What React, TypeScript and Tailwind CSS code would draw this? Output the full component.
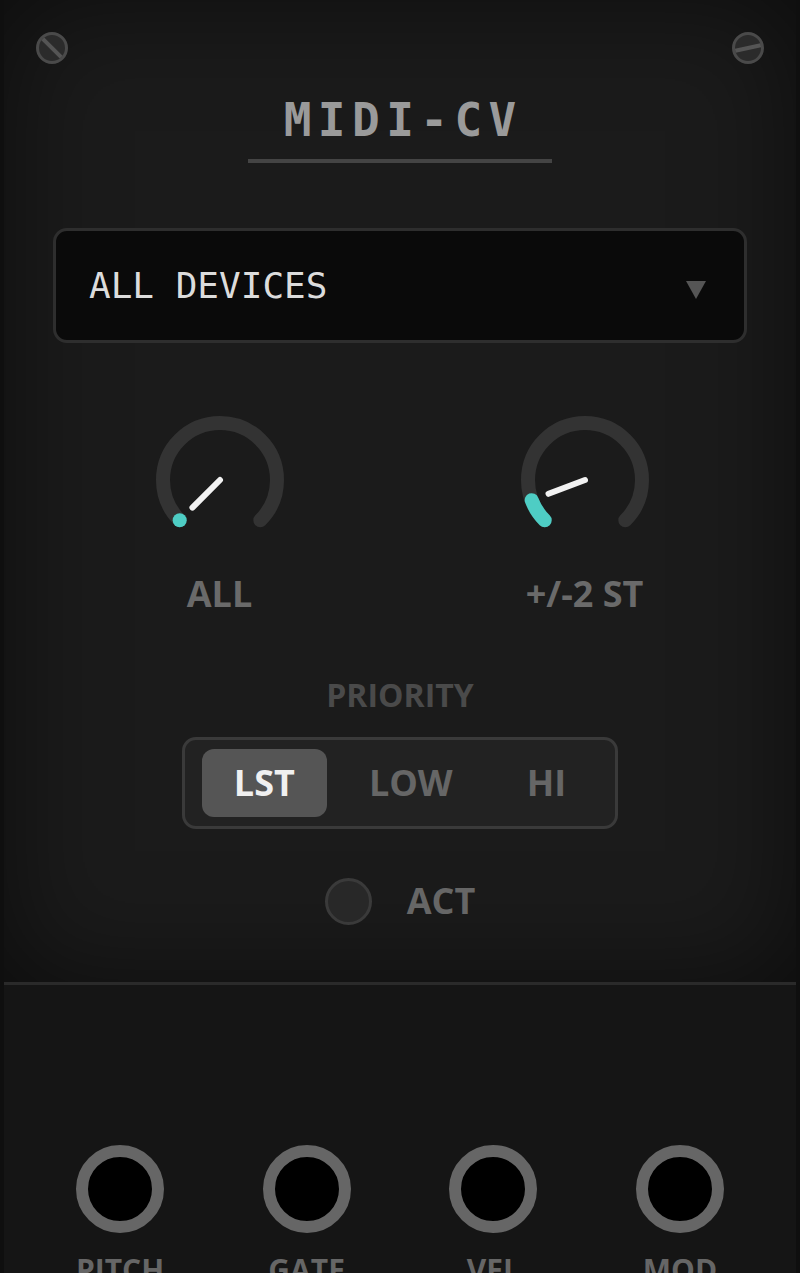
import React from "react";

// clock angle: 0 = up, clockwise
const pt = (deg: number, r: number) => {
  const a = (deg * Math.PI) / 180;
  return [70 + r * Math.sin(a), 70 - r * Math.cos(a)];
};

const Knob = ({ value, label }: { value: number; label: string }) => {
  const start = -135;
  const end = start + 270 * value;
  const [sx, sy] = pt(start, 57);
  const [ex, ey] = pt(135, 57);
  const [vx, vy] = pt(end, 57);
  const [px, py] = pt(end, 39);
  return (
    <div className="flex flex-col items-center">
      <svg width="140" height="140" viewBox="0 0 140 140">
        <path
          d={`M ${sx} ${sy} A 57 57 0 1 1 ${ex} ${ey}`}
          fill="none"
          stroke="#333333"
          strokeWidth="14"
          strokeLinecap="round"
        />
        <path
          d={`M ${sx} ${sy} A 57 57 0 0 1 ${vx} ${vy}`}
          fill="none"
          stroke="#4ecdc4"
          strokeWidth="14"
          strokeLinecap="round"
        />
        <line x1="70" y1="70" x2={px} y2={py} stroke="#f2f2f2" strokeWidth="6" strokeLinecap="round" />
      </svg>
      <div className="mt-[22px] text-[36px] leading-[1.2] font-bold text-[#6a6a6a] font-['Open_Sans',sans-serif]">
        {label}
      </div>
    </div>
  );
};

const Jack = ({ label }: { label: string }) => (
  <div className="flex w-[100px] flex-col items-center">
    <div className="h-[88px] w-[88px] rounded-full border-[12px] border-[#666666] bg-black" />
    <div className="mt-[19px] text-[30px] leading-[1.2] font-bold text-[#666666] font-['Open_Sans',sans-serif]">
      {label}
    </div>
  </div>
);

const Screw = ({ className, slot }: { className: string; slot: string }) => (
  <div
    className={`absolute flex h-8 w-8 items-center justify-center rounded-full border-[3px] border-[#4a4a4a] bg-[#2b2b2b] ${className}`}
  >
    <div className={`h-[4px] w-[26px] bg-[#555555] ${slot}`} />
  </div>
);

export default function App() {
  return (
    <div className="min-h-screen w-full border-x-4 border-[#0f0f0f] bg-[#151515] font-['Open_Sans',sans-serif]">
      {/* upper panel */}
      <div className="relative flex flex-col items-center bg-[#1b1b1b] px-[49px] pt-[97px] pb-[57px] shadow-[inset_0_0_110px_rgba(0,0,0,0.55)]">
        <Screw className="top-[32px] left-[32px]" slot="rotate-45" />
        <Screw className="top-[32px] right-[32px]" slot="-rotate-12" />

        <h1 className="pl-[0.14em] text-[46px] leading-none font-bold tracking-[0.14em] text-[#9a9a9a] font-['DejaVu_Sans_Mono',monospace]">
          MIDI-CV
        </h1>
        <div className="mt-[16px] h-[4px] w-[304px] bg-[#444444]" />

        <div className="mt-[65px] flex h-[115px] w-full items-center justify-between rounded-[14px] border-[3px] border-[#2e2e2e] bg-[#0a0a0a] pr-[38px] pl-[33px]">
          <span className="text-[36px] text-[#dcdcdc] font-['DejaVu_Sans_Mono',monospace]">ALL DEVICES</span>
          <svg width="20" height="18" viewBox="0 0 20 18" className="mt-[8px]">
            <polygon points="0,0 20,0 10,18" fill="#555555" />
          </svg>
        </div>

        <div className="mt-[67px] grid w-full grid-cols-2">
          <div className="flex justify-center pr-[14px]">
            <Knob value={0} label="ALL" />
          </div>
          <div className="flex justify-center pl-[22px]">
            <Knob value={0.09} label="+/-2 ST" />
          </div>
        </div>

        <div className="mt-[61px] text-[32px] leading-[1.2] font-bold text-[#4a4a4a]">PRIORITY</div>

        <div className="mt-[22px] flex gap-[10px] rounded-[14px] border-[3px] border-[#3a3a3a] bg-[#222222] px-[17px] py-[9px]">
          <div className="flex h-[68px] items-center rounded-[12px] bg-[#555555] px-8 text-[36px] font-bold text-[#f0f0f0]">
            LST
          </div>
          <div className="flex h-[68px] items-center px-8 text-[36px] font-bold text-[#666666]">LOW</div>
          <div className="flex h-[68px] items-center px-8 text-[36px] font-bold text-[#666666]">HI</div>
        </div>

        <div className="mt-[49px] flex items-center gap-[35px]">
          <div className="h-[47px] w-[47px] rounded-full border-[3px] border-[#3a3a3a] bg-[#282828]" />
          <span className="text-[36px] leading-[1.2] font-bold text-[#666666]">ACT</span>
        </div>
      </div>

      {/* jack panel */}
      <div className="flex justify-between border-t-[3px] border-[#2a2a2a] bg-[#151515] px-[66px] pt-[160px] pb-[60px]">
        <Jack label="PITCH" />
        <Jack label="GATE" />
        <Jack label="VEL" />
        <Jack label="MOD" />
      </div>
    </div>
  );
}
